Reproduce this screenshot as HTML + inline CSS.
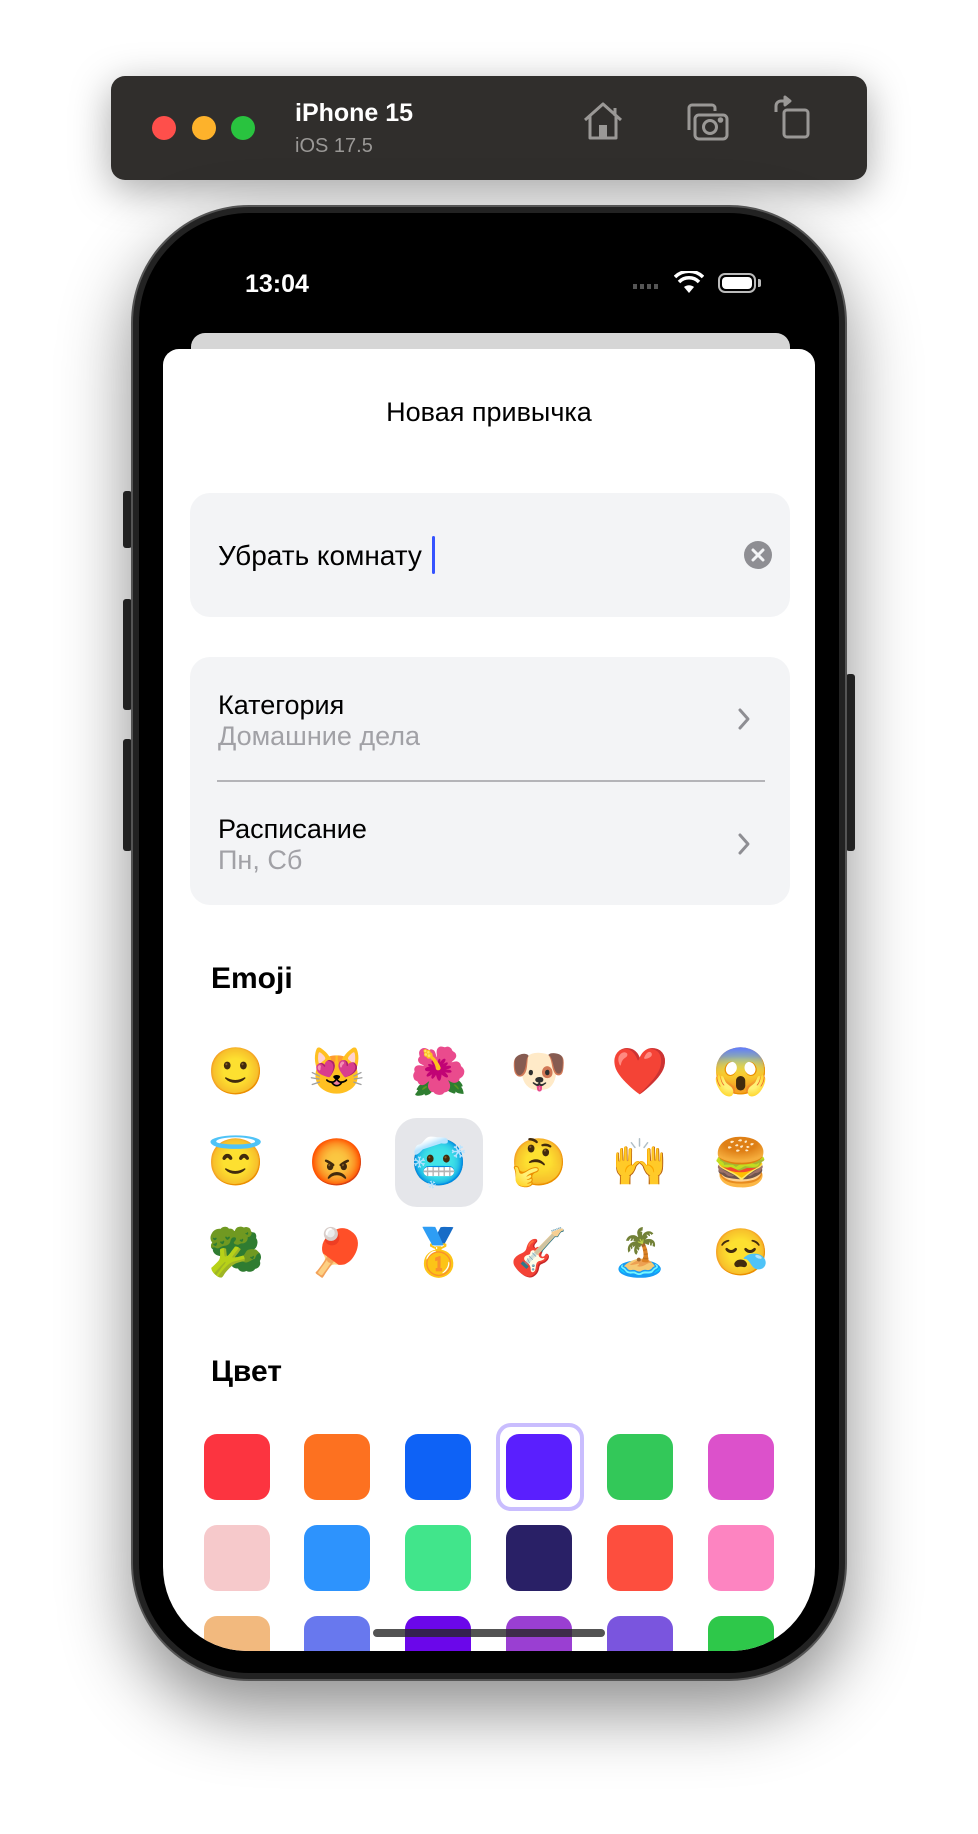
<!DOCTYPE html>
<html><head><meta charset="utf-8">
<style>
*{margin:0;padding:0;box-sizing:border-box}
body{width:978px;height:1834px;background:#fff;position:relative;overflow:hidden;font-family:"Liberation Sans","DejaVu Sans",sans-serif}
.abs{position:absolute}
.toolbar{left:111px;top:76px;width:756px;height:104px;background:#302e2c;border-radius:14px;box-shadow:0 10px 40px rgba(0,0,0,.35)}
.dot{width:24px;height:24px;border-radius:50%;top:40px}
.phone{left:131px;top:205px;width:716px;height:1476px;border-radius:118px;background:#222;box-shadow:0 30px 70px rgba(0,0,0,.45);border:2px solid #555}
.screen{left:139px;top:213px;width:700px;height:1460px;border-radius:110px;background:#000;overflow:hidden}
.btn{background:#2a2a2a;border-radius:3px}
.sheet{left:163px;top:349px;width:652px;height:1302px;background:#fff;border-radius:16px 16px 84px 84px;overflow:hidden}
.card{background:#f3f4f6;border-radius:20px}
.t{white-space:nowrap;line-height:1}
.emo{position:absolute;width:88px;height:88px;font-size:46px;line-height:88px;text-align:center;font-family:"Noto Color Emoji","Apple Color Emoji","DejaVu Sans",sans-serif}
.sq{position:absolute;width:66px;height:66px;border-radius:13px}
</style></head><body>

<div class="abs toolbar">
  <div class="abs dot" style="left:41px;background:#fe4f4b"></div>
  <div class="abs dot" style="left:81px;background:#fdb22b"></div>
  <div class="abs dot" style="left:120px;background:#29c33f"></div>
  <div class="abs t" style="left:184px;top:25px;color:#fff;font-weight:bold;font-size:25px">iPhone 15</div>
  <div class="abs t" style="left:184px;top:60px;color:#9a9896;font-size:20px">iOS 17.5</div>
  <svg class="abs" style="left:470px;top:24px" width="44" height="44" viewBox="0 0 44 44" fill="none" stroke="#9a9896" stroke-width="3" stroke-linejoin="round"><path d="M4 20 L22 4 L40 20"/><path d="M9 16 V38 H35 V16"/><path d="M34 8 V16"/><rect x="18" y="25" width="8" height="13" fill="#9a9896" stroke="none"/></svg>
  <svg class="abs" style="left:572px;top:24px" width="46" height="44" viewBox="0 0 46 44" fill="none" stroke="#9a9896" stroke-width="3" stroke-linejoin="round"><path d="M6 30 V8 a3 3 0 0 1 3 -3 H29 a3 3 0 0 1 3 3 V11"/><rect x="12" y="15" width="32" height="24" rx="4"/><circle cx="27" cy="27" r="6.5"/><circle cx="37.5" cy="20" r="1.3" fill="#9a9896"/></svg>
  <svg class="abs" style="left:662px;top:18px" width="40" height="50" viewBox="0 0 40 50" fill="none" stroke="#9a9896" stroke-width="3" stroke-linejoin="round"><rect x="11" y="16" width="24" height="27" rx="3"/><path d="M3 18 V12 a5 5 0 0 1 5 -5 H13"/><path d="M12 3 L17 7 L12 11 Z" fill="#9a9896"/></svg>
</div>

<div class="abs btn" style="left:123px;top:491px;width:9px;height:57px"></div>
<div class="abs btn" style="left:123px;top:599px;width:9px;height:111px"></div>
<div class="abs btn" style="left:123px;top:739px;width:9px;height:112px"></div>
<div class="abs btn" style="left:846px;top:674px;width:9px;height:177px"></div>

<div class="abs phone"></div>
<div class="abs screen">
  <div class="abs t" style="left:106px;top:59px;color:#fff;font-size:25px;font-weight:bold">13:04</div>
  <div class="abs" style="left:494px;top:71px;width:28px;height:5px;background:repeating-linear-gradient(90deg,#555 0 4px,transparent 4px 7px)"></div>
  <svg class="abs" style="left:535px;top:58px" width="30" height="24" viewBox="0 0 30 24"><path d="M15 22 L10 16 A8 8 0 0 1 20 16 Z" fill="#fff"/><path d="M5 11 A14 14 0 0 1 25 11" stroke="#fff" stroke-width="3.5" fill="none"/><path d="M1 6 A20 20 0 0 1 29 6" stroke="#fff" stroke-width="3.5" fill="none"/></svg>
  <div class="abs" style="left:579px;top:60px;width:38px;height:20px;border:2px solid #bbb;border-radius:7px;padding:2px"><div style="width:100%;height:100%;background:#fff;border-radius:4px"></div></div>
  <div class="abs" style="left:619px;top:66px;width:3px;height:8px;background:#bbb;border-radius:0 2px 2px 0"></div>
  <div class="abs" style="left:52px;top:120px;width:599px;height:40px;background:#d6d6d6;border-radius:14px 14px 0 0"></div>
</div>

<div class="abs sheet">
  <div class="abs t" style="left:0;width:652px;text-align:center;top:50px;font-size:27px;color:#000">Новая привычка</div>
  <div class="abs card" style="left:27px;top:144px;width:600px;height:124px"></div>
  <div class="abs t" style="left:55px;top:193px;font-size:28px;color:#000">Убрать комнату</div>
  <div class="abs" style="left:269px;top:187px;width:3px;height:38px;background:#3553ff;border-radius:2px"></div>
  <svg class="abs" style="left:581px;top:192px" width="28" height="28" viewBox="0 0 28 28"><circle cx="14" cy="14" r="14" fill="#8e8e93"/><path d="M9 9 L19 19 M19 9 L9 19" stroke="#f3f4f6" stroke-width="3" stroke-linecap="round"/></svg>

  <div class="abs card" style="left:27px;top:308px;width:600px;height:248px"></div>
  <div class="abs t" style="left:55px;top:343px;font-size:27px;color:#000">Категория</div>
  <div class="abs t" style="left:55px;top:374px;font-size:27px;color:#a1a1a6">Домашние дела</div>
  <div class="abs" style="left:54px;top:431px;width:548px;height:2px;background:#b4b4b8"></div>
  <div class="abs t" style="left:55px;top:467px;font-size:27px;color:#000">Расписание</div>
  <div class="abs t" style="left:55px;top:498px;font-size:27px;color:#a1a1a6">Пн, Сб</div>
  <svg class="abs" style="left:574px;top:358px" width="14" height="24" viewBox="0 0 14 24"><path d="M3 3 L11 12 L3 21" stroke="#8e8e93" stroke-width="3" fill="none" stroke-linecap="round" stroke-linejoin="round"/></svg>
  <svg class="abs" style="left:574px;top:483px" width="14" height="24" viewBox="0 0 14 24"><path d="M3 3 L11 12 L3 21" stroke="#8e8e93" stroke-width="3" fill="none" stroke-linecap="round" stroke-linejoin="round"/></svg>

  <div class="abs t" style="left:48px;top:615px;font-size:30px;font-weight:bold;color:#000">Emoji</div>
  <div class="abs" style="left:232px;top:769px;width:88px;height:89px;background:#e5e6ea;border-radius:22px"></div>
  <div class="emo" style="left:29px;top:679px">🙂</div>
  <div class="emo" style="left:130px;top:679px">😻</div>
  <div class="emo" style="left:232px;top:679px">🌺</div>
  <div class="emo" style="left:332px;top:679px">🐶</div>
  <div class="emo" style="left:433px;top:679px">❤️</div>
  <div class="emo" style="left:534px;top:679px">😱</div>
  <div class="emo" style="left:29px;top:770px">😇</div>
  <div class="emo" style="left:130px;top:770px">😡</div>
  <div class="emo" style="left:232px;top:770px">🥶</div>
  <div class="emo" style="left:332px;top:770px">🤔</div>
  <div class="emo" style="left:433px;top:770px">🙌</div>
  <div class="emo" style="left:534px;top:770px">🍔</div>
  <div class="emo" style="left:29px;top:860px">🥦</div>
  <div class="emo" style="left:130px;top:860px">🏓</div>
  <div class="emo" style="left:232px;top:860px">🥇</div>
  <div class="emo" style="left:332px;top:860px">🎸</div>
  <div class="emo" style="left:433px;top:860px">🏝</div>
  <div class="emo" style="left:534px;top:860px">😪</div>

  <div class="abs t" style="left:48px;top:1008px;font-size:30px;font-weight:bold;color:#000">Цвет</div>
  <div class="abs" style="left:333px;top:1074px;width:88px;height:88px;border:4px solid #c9bdfe;border-radius:15px"></div>
  <div class="sq" style="left:41px;top:1085px;background:#fc3440"></div>
  <div class="sq" style="left:141px;top:1085px;background:#fd7120"></div>
  <div class="sq" style="left:242px;top:1085px;background:#0e62f6"></div>
  <div class="sq" style="left:343px;top:1085px;background:#5a1ffe"></div>
  <div class="sq" style="left:444px;top:1085px;background:#33c859"></div>
  <div class="sq" style="left:545px;top:1085px;background:#dc51cb"></div>
  <div class="sq" style="left:41px;top:1176px;background:#f6c9cb"></div>
  <div class="sq" style="left:141px;top:1176px;background:#2d93fd"></div>
  <div class="sq" style="left:242px;top:1176px;background:#41e58b"></div>
  <div class="sq" style="left:343px;top:1176px;background:#292066"></div>
  <div class="sq" style="left:444px;top:1176px;background:#fd4e3e"></div>
  <div class="sq" style="left:545px;top:1176px;background:#fd84c1"></div>
  <div class="sq" style="left:41px;top:1267px;background:#f2b97e"></div>
  <div class="sq" style="left:141px;top:1267px;background:#6878ee"></div>
  <div class="sq" style="left:242px;top:1267px;background:#6b07ea"></div>
  <div class="sq" style="left:343px;top:1267px;background:#9a3fd2"></div>
  <div class="sq" style="left:444px;top:1267px;background:#7a55de"></div>
  <div class="sq" style="left:545px;top:1267px;background:#2ec84a"></div>
  <div class="abs" style="left:210px;top:1280px;width:232px;height:8px;border-radius:4px;background:rgba(40,40,40,.8)"></div>
</div>
</body></html>
